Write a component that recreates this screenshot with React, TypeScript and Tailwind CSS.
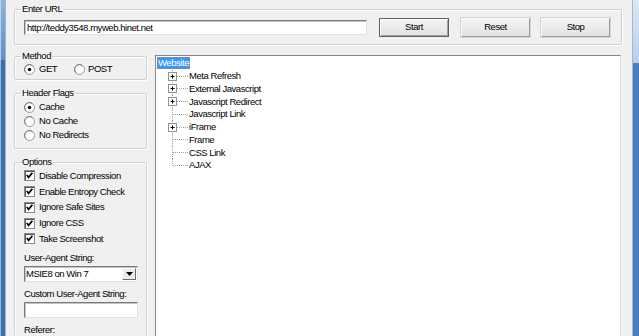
import type { ReactNode } from 'react';

const sunken =
  'border border-t-[#7a7a7a] border-l-[#7a7a7a] border-r-[#e3e3e3] border-b-[#e3e3e3] bg-white shadow-[inset_1px_1px_0_#c4c4c4]';

function GroupBox({ label, className, children }: { label: string; className?: string; children: ReactNode }) {
  return (
    <fieldset
      className={`border border-[#d0d0d0] rounded-[2px] shadow-[inset_1px_1px_0_#fff,1px_1px_0_#fff] ${className ?? ''}`}
    >
      <legend className="ml-[6px] px-[1px] h-[12px] leading-[12px]">{label}</legend>
      {children}
    </fieldset>
  );
}

function Radio({ checked }: { checked?: boolean }) {
  return (
    <svg width="11" height="11" viewBox="0 0 11 11" className="shrink-0">
      <circle cx="5.5" cy="5.5" r="5" fill="#fff" stroke="#9a9a9a" />
      <path d="M2 8.5 A4.5 4.5 0 0 1 8.5 2" fill="none" stroke="#6a6a6a" strokeWidth="0.8" />
      {checked && <circle cx="5.5" cy="5.5" r="1.8" fill="#111" />}
    </svg>
  );
}

function Check() {
  return (
    <svg width="11" height="11" viewBox="0 0 11 11" className="shrink-0">
      <rect x="0.5" y="0.5" width="10" height="10" fill="#fff" stroke="#8a8a8a" />
      <line x1="1" y1="1.5" x2="10" y2="1.5" stroke="#555" />
      <line x1="1.5" y1="1" x2="1.5" y2="10" stroke="#555" />
      <polyline points="2.8,5 4.6,7.4 8.4,2.8" fill="none" stroke="#000" strokeWidth="1.7" />
    </svg>
  );
}

function Button({ label, primary }: { label: string; primary?: boolean }) {
  return (
    <button
      type="button"
      className={`h-[19px] flex items-center justify-center bg-gradient-to-b from-[#f4f4f4] to-[#e2e2e2] border ${
        primary
          ? 'w-[70px] border-[#606060] shadow-[inset_1px_1px_0_#fff,inset_-1px_-1px_0_#a0a0a0]'
          : 'w-[69px] border-t-[#f8f8f8] border-l-[#f8f8f8] border-r-[#9a9a9a] border-b-[#9a9a9a] shadow-[0_0_0_1px_#d4d4d4]'
      }`}
    >
      {label}
    </button>
  );
}

function TreeRow({ label, expander, last }: { label: string; expander?: boolean; last?: boolean }) {
  return (
    <div className="h-[12.75px] flex items-center">
      <svg width="33" height="13" viewBox="0 0 33 13" className="shrink-0 overflow-visible">
        <line x1="16.5" y1="0" x2="16.5" y2={last ? 6.5 : 13} stroke="#a0a0a0" strokeDasharray="1 1" />
        <line x1="17" y1="6.5" x2="33" y2="6.5" stroke="#a0a0a0" strokeDasharray="1 1" />
        {expander && (
          <g>
            <rect x="12.5" y="2.5" width="8" height="8" fill="#fff" stroke="#919191" />
            <line x1="14.5" y1="6.5" x2="18.5" y2="6.5" stroke="#000" />
            <line x1="16.5" y1="4.5" x2="16.5" y2="8.5" stroke="#000" />
          </g>
        )}
      </svg>
      <span className="leading-[12px]">{label}</span>
    </div>
  );
}

export default function App() {
  const checks = ['Disable Compression', 'Enable Entropy Check', 'Ignore Safe Sites', 'Ignore CSS', 'Take Screenshot'];
  const tree: { label: string; expander?: boolean }[] = [
    { label: 'Meta Refresh', expander: true },
    { label: 'External Javascript', expander: true },
    { label: 'Javascript Redirect', expander: true },
    { label: 'Javascript Link' },
    { label: 'iFrame', expander: true },
    { label: 'Frame' },
    { label: 'CSS Link' },
    { label: 'AJAX' },
  ];

  return (
    <div className="w-[639px] h-[336px] flex overflow-hidden text-[9.5px] tracking-[-0.45px] text-black font-['Liberation_Sans',Arial,sans-serif]">
      {/* left window frame */}
      <div className="w-[6px] shrink-0 flex flex-col border-r border-[#9fb3ca]">
        <div className="h-[60px] bg-gradient-to-b from-[#8fb3dc] to-[#5f8ec7] border-l border-[#bcd2ea]" />
        <div className="flex-1 bg-[#3a70b2] border-l border-[#9ab8dc]" />
      </div>

      <div className="flex-1 bg-[#f0f0f0] flex flex-col">
        <GroupBox label="Enter URL" className="mt-[3px] ml-[8px] mr-[10px]">
          <div className="flex items-center pl-[9px] pt-[3px] pb-[7px]">
            <div className={`${sunken} w-[343px] h-[15px] flex items-center pl-[2px] leading-[12px]`}>
              http://teddy3548.myweb.hinet.net
            </div>
            <div className="ml-[12px]">
              <Button label="Start" primary />
            </div>
            <div className="ml-[12px]">
              <Button label="Reset" />
            </div>
            <div className="ml-[11px]">
              <Button label="Stop" />
            </div>
          </div>
        </GroupBox>

        <div className="flex mt-[5px] flex-1 min-h-0">
          <div className="w-[133px] ml-[8px] shrink-0 flex flex-col">
            <GroupBox label="Method">
              <div className="flex items-center h-[13px] pl-[9px] mt-[1px] mb-[3px]">
                <div className="flex items-center w-[50px] gap-[4px]">
                  <Radio checked />
                  <span>GET</span>
                </div>
                <div className="flex items-center gap-[3px]">
                  <Radio />
                  <span>POST</span>
                </div>
              </div>
            </GroupBox>

            <GroupBox label="Header Flags" className="mt-[7px]">
              <div className="flex flex-col pl-[9px] pt-[1px] pb-[6px]">
                {['Cache', 'No Cache', 'No Redirects'].map((t, i) => (
                  <div key={t} className="h-[14px] flex items-center gap-[4px]">
                    <Radio checked={i === 0} />
                    <span>{t}</span>
                  </div>
                ))}
              </div>
            </GroupBox>

            <GroupBox label="Options" className="mt-[7px] h-[200px]">
              <div className="flex flex-col pl-[9px]">
                {checks.map((t) => (
                  <div key={t} className="h-[15.75px] flex items-center gap-[4px]">
                    <Check />
                    <span>{t}</span>
                  </div>
                ))}
                <div className="mt-[5px] h-[12px] leading-[12px]">User-Agent String:</div>
                <div className={`${sunken} mt-[2px] w-[114px] h-[16px] flex items-center justify-between`}>
                  <span className="pl-[1px] leading-[12px]">MSIE8 on Win 7</span>
                  <div className="w-[14px] h-[12px] mr-[1px] bg-[#ececec] border border-t-[#fbfbfb] border-l-[#fbfbfb] border-r-[#6a6a6a] border-b-[#6a6a6a] flex items-center justify-center">
                    <svg width="7" height="4" viewBox="0 0 7 4">
                      <polygon points="0,0 7,0 3.5,4" fill="#000" />
                    </svg>
                  </div>
                </div>
                <div className="mt-[6px] h-[12px] leading-[12px]">Custom User-Agent String:</div>
                <div className={`${sunken} mt-[2px] w-[114px] h-[16px]`} />
                <div className="mt-[6px] h-[12px] leading-[12px]">Referer:</div>
              </div>
            </GroupBox>
          </div>

          <div className="flex-1 ml-[8px] mr-[11px] mt-[5px] bg-white border border-[#828790] border-r-[#e0e0e0] border-b-0 pt-[1px]">
            <div className="h-[12.75px] flex items-center pl-[1px]">
              <span className="bg-[#3399ff] text-white px-[1px] h-[12px] leading-[11px] outline outline-1 outline-dotted outline-[#c08040] -outline-offset-1">
                Website
              </span>
            </div>
            {tree.map((n, i) => (
              <TreeRow key={n.label} label={n.label} expander={n.expander} last={i === tree.length - 1} />
            ))}
          </div>
        </div>
      </div>

      {/* right window frame */}
      <div className="w-[7px] shrink-0 flex flex-col border-l border-[#a6b8cc]">
        <div className="h-[63px] bg-gradient-to-b from-[#dbe7f4] to-[#b9d0ea]" />
        <div className="flex-1 bg-[#4a7ebe]" />
      </div>
    </div>
  );
}
